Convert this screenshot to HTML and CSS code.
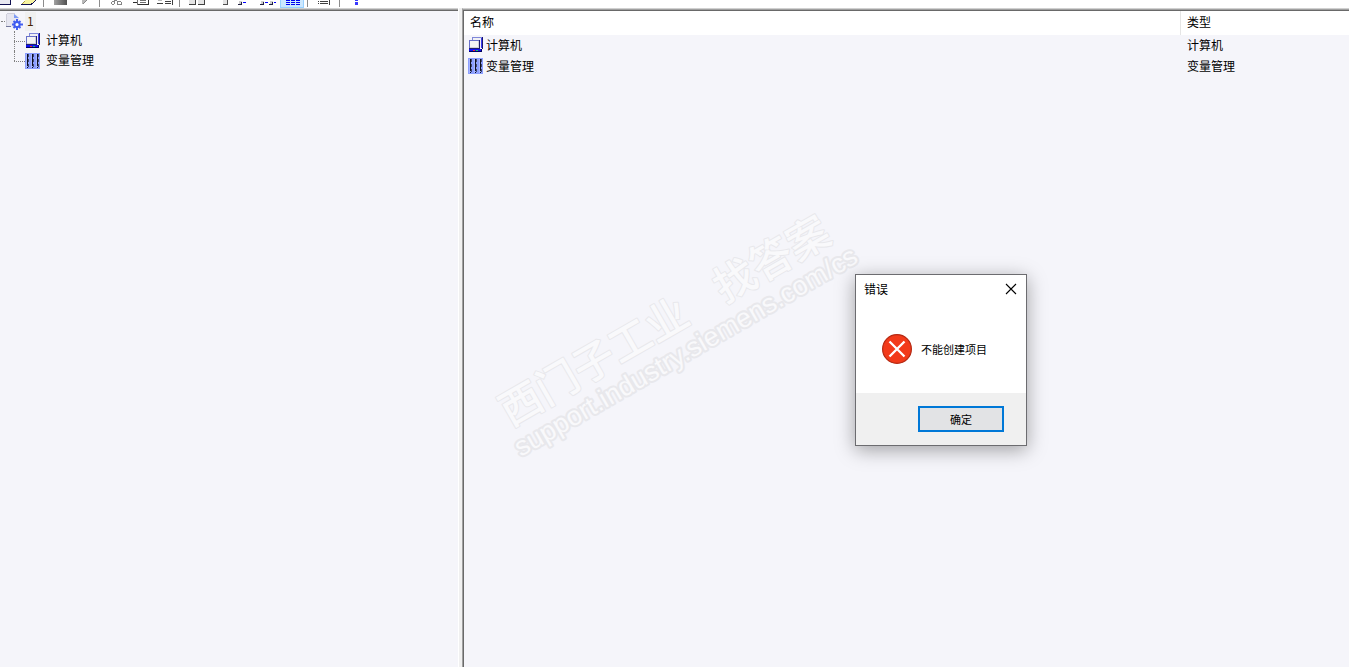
FILE: index.html
```
<!DOCTYPE html>
<html lang="zh-CN">
<head>
<meta charset="utf-8">
<title>项目管理器</title>
<link rel="stylesheet" href="styles.css">
</head>
<body>
<svg class="symbols" aria-hidden="true" shape-rendering="crispEdges">
  <symbol id="computer" viewBox="0 0 16 16">
    <path d="M5 1h8v9H5z" fill="#f0f0f4"/>
    <path d="M4 0h10v1H4zM4 0h1v3H4z" fill="#8088d8"/>
    <path d="M13 1h1v10h-1z" fill="#3c3cf0"/><path d="M14 0h1v12h-1z" fill="#181870"/>
    <path d="M1 3h11v9H1z" fill="#6870c8"/>
    <path d="M2 4h9v7H2z" fill="#f4f4f4"/><path d="M2 10h9v1H2zM10 4h1v7h-1z" fill="#d0d0d8"/>
    <path d="M11 3h1v9h-1zM1 11h11v1H1z" fill="#20206c"/>
    <path d="M1 12h12v2H1z" fill="#1010f0"/><path d="M1 14h13v1H1zM13 12h1v2h-1z" fill="#000060"/>
    <path d="M5 13h2v1H5z" fill="#f03030"/><path d="M8 13h2v1H8z" fill="#20c060"/>
  </symbol>
  <symbol id="tags" viewBox="0 0 16 16">
    <path d="M0 0h15v16H0z" fill="#8c9fff"/>
    <path d="M1 1h1v14H1zM6 1h1v14H6zM11 1h1v14h-1z" fill="#aab8ff"/>
    <path d="M2 1h1v12H2zM7 1h1v12H7zM12 1h1v12h-1zM2 14h1v1H2zM7 14h1v1H7zM12 14h1v1h-1z" fill="#101020"/>
    <path d="M3 1h1v3H3zM8 1h1v3H8zM13 1h1v3h-1zM3 6h1v3H3zM8 6h1v3H8zM13 6h1v3h-1zM3 11h1v3H3zM8 11h1v3H8zM13 11h1v3h-1z" fill="#404870"/>
  </symbol>
</svg>

<div class="app">
  <header class="toolbar">
    <button class="tool first" type="button" aria-label="新建"><svg viewBox="8 0 16 8"><path d="M8 0h10v4H8z" fill="#e8e8f0"/><path d="M8 4h11v1H8zM18 0h1v5h-1z" fill="#101050"/></svg></button>
    <button class="tool" type="button" aria-label="打开"><svg viewBox="0 0 24 8"><path d="M9 0h10l-4 4H6z" fill="#f7f3a0"/><path d="M5 4h11v1H5zM15 3h2v1h-2zM17 2h1v1h-1zM18 1h1v1h-1zM19 0h1v1h-1z" fill="#101050"/><path d="M6 3h1v1H6zM7 2h1v1H7zM8 1h1v1H8z" fill="#b0a040"/></svg></button>
    <span class="sep"></span>
    <button class="tool" type="button" aria-label="停止"><svg viewBox="0 0 24 8"><defs><linearGradient id="grey"><stop offset="0" stop-color="#a0a0a0"/><stop offset="1" stop-color="#505050"/></linearGradient></defs><path d="M6 0h13v5H6z" fill="url(#grey)"/></svg></button>
    <button class="tool" type="button" aria-label="运行"><svg viewBox="0 0 24 8"><path d="M10 0h5v1h-1v1h-1v1h-1v1h-2z" fill="#b8b8b8"/><path d="M14 0h1v1h-1zM13 1h1v1h-1zM12 2h1v1h-1zM11 3h1v1h-1z" fill="#888"/></svg></button>
    <span class="sep"></span>
    <button class="tool" type="button" aria-label="剪切"><svg viewBox="0 0 24 8"><path d="M10 0h3v1h-3zM8 1h3v1H8zM7 2h1v2H7zM10 2h1v2h-1zM8 4h2v1H8zM13 1h4v1h-4zM13 2h1v3h-1zM17 2h1v3h-1zM14 4h3v1h-3z" fill="#848484"/></svg></button>
    <button class="tool" type="button" aria-label="复制"><svg viewBox="0 0 24 8"><path d="M5 2h5v1H5zM10 4h11v1H10zM20 0h1v5h-1z" fill="#303030"/><path d="M12 0h6v1h-6zM12 2h6v1h-6zM9 0h1v5H9z" fill="#707070"/></svg></button>
    <button class="tool" type="button" aria-label="粘贴"><svg viewBox="0 0 24 8"><path d="M5 3h6v1H5zM13 1h6v1h-6zM13 3h6v1h-6zM20 0h1v5h-1z" fill="#404040"/><path d="M6 0h4v1H6z" fill="#bbb"/></svg></button>
    <span class="sep"></span>
    <button class="tool" type="button" aria-label="大图标"><svg viewBox="0 0 24 8"><path d="M5 0h6v4H5zM14 0h6v4h-6z" fill="#e4e4e4"/><path d="M5 4h7v1H5zM11 0h1v5h-1zM14 4h7v1h-7zM20 0h1v5h-1z" fill="#404040"/></svg></button>
    <button class="tool" type="button" aria-label="小图标"><svg viewBox="0 0 24 8"><path d="M15 0h5v4h-5z" fill="#e4e4e4"/><path d="M15 4h5v1h-5zM19 0h1v5h-1z" fill="#505050"/></svg></button>
    <button class="tool" type="button" aria-label="列表"><svg viewBox="0 0 24 8"><path d="M7 1h3v3H7z" fill="#ccc"/><path d="M6 4h4v1H6zM9 2h1v3H9z" fill="#202040"/><path d="M11 2h3v1h-3z" fill="#00f"/></svg></button>
    <button class="tool" type="button" aria-label="平铺"><svg viewBox="0 0 24 8"><path d="M5 1h3v3H5zM14 1h3v3h-3z" fill="#ccc"/><path d="M4 4h4v1H4zM7 2h1v3H7zM13 4h4v1h-4zM16 2h1v3h-1z" fill="#202040"/><path d="M9 2h3v1H9zM18 2h2v1h-2z" fill="#00f"/></svg></button>
    <button class="tool active" type="button" aria-label="详细信息"><svg viewBox="1 0 22 7"><path d="M6 0h4v1H6zM11 0h4v1h-4zM16 0h4v1h-4zM6 2h4v1H6zM11 2h4v1h-4zM16 2h4v1h-4zM6 4h4v1H6zM11 4h4v1h-4zM16 4h4v1h-4z" fill="#0000f0"/></svg></button>
    <span class="sep"></span>
    <button class="tool" type="button" aria-label="属性"><svg viewBox="0 0 24 8"><path d="M6 1h1v1H6zM6 3h1v1H6zM8 1h8v1H8zM8 3h8v1H8zM17 0h1v5h-1z" fill="#404040"/></svg></button>
    <span class="sep"></span>
    <button class="tool" type="button" aria-label="帮助"><svg viewBox="0 0 24 8"><path d="M11 0h3v1h-3zM11 2h3v3h-3z" fill="#3838ff"/></svg></button>
  </header>

  <main class="panes">
    <nav class="tree" aria-label="项目">
      <a class="node root" href="#"><svg class="root-icon" viewBox="0 0 18 18" aria-hidden="true">
        <path d="M2 2h8l4 4v9H2z" fill="#e6e6f0"/><path d="M9 2v4h5z" fill="#7f9cf4"/>
        <path d="M1 14h5v1H1z" fill="#74789c"/><path d="M1 2h1v12H1zM2 1h8v1H2z" fill="#d0d0dc"/>
        <path d="M12 7v11M7 12.500h11M8.500 9l7 7M15.500 9l-7 7" stroke="#4460f0" stroke-width="2"/>
        <circle cx="12" cy="12.500" r="2.600" fill="#fff" stroke="#3e5cf0" stroke-width="2"/></svg><span class="selected">1</span></a>
      <ul class="children">
        <li><a class="node" href="#"><svg class="icon" aria-hidden="true"><use href="#computer"/></svg><span>计算机</span></a></li>
        <li><a class="node" href="#"><svg class="icon" aria-hidden="true"><use href="#tags"/></svg><span>变量管理</span></a></li>
      </ul>
    </nav>
    <div class="splitter"></div>
    <section class="list">
      <table>
        <thead><tr><th scope="col">名称</th><th class="type" scope="col">类型</th></tr></thead>
        <tbody>
          <tr><td><div class="name"><svg class="icon" aria-hidden="true"><use href="#computer"/></svg>计算机</div></td><td>计算机</td></tr>
          <tr><td><div class="name"><svg class="icon" aria-hidden="true"><use href="#tags"/></svg>变量管理</div></td><td>变量管理</td></tr>
        </tbody>
      </table>
    </section>
  </main>
</div>

<svg class="watermark" viewBox="0 0 480 340" aria-hidden="true">
  <g transform="translate(76 289) rotate(-30)">
    <text class="mark-title" x="0" y="-31">西门子工业</text>
    <text class="mark-title" x="247" y="-31">找答案</text>
    <text class="mark-url" x="-6" y="0">support.industry.siemens.com/cs</text>
  </g>
</svg>

<div class="dialog" role="alertdialog" aria-labelledby="dialog-title" aria-describedby="dialog-message">
  <div class="dialog-head">
    <span id="dialog-title">错误</span>
    <button class="close" type="button" aria-label="关闭"><svg viewBox="0 0 12 12"><path d="M1 1l10 10M11 1L1 11" stroke="#000" stroke-width="1.100"/></svg></button>
  </div>
  <div class="dialog-body">
    <svg class="error" viewBox="0 0 30 30" aria-hidden="true"><circle cx="15" cy="15" r="14.400" fill="#f23a1a" stroke="#b52a14" stroke-width="1.200"/><path d="M7.500 7.500l15 15M22.500 7.500l-15 15" stroke="#fff" stroke-width="2.300"/></svg>
    <span id="dialog-message">不能创建项目</span>
  </div>
  <div class="dialog-foot"><button class="ok" type="button">确定</button></div>
</div>
</body>
</html>
```
FILE: styles.css
```
* { box-sizing: border-box; }

body {
  margin: 0;
  background: #f5f5fa;
  color: #000;
  font: 12px/18px "Noto Sans CJK SC", sans-serif;
  overflow: hidden;
}

button { margin: 0; padding: 0; border: 0; background: none; font: inherit; color: inherit; }
a { color: inherit; text-decoration: none; }
svg { display: block; flex: none; }
.symbols { position: absolute; width: 0; height: 0; }

.app { display: flex; flex-direction: column; height: 100vh; }

.toolbar { display: flex; flex: none; height: 8px; background: #fff; }
.tool { width: 24px; height: 8px; }
.tool.first { width: 16px; }
.tool svg { width: 100%; height: 8px; shape-rendering: crispEdges; }
.tool.active { background: #cce8ff; border: solid #99d1ff; border-width: 0 1px 1px; }
.tool.active svg { width: 22px; height: 7px; }
.sep { width: 8px; height: 7px; border-left: 3px solid #fff; background: linear-gradient(90deg, #8c8c8c 1px, #fff 1px); }

.panes { display: flex; flex: 1; min-height: 0; }

.tree {
  flex: none;
  width: 458px;
  border-top: 1px solid #d0d0d0;
  box-shadow: inset 0 1px #a0a0a0, inset 0 2px #696969;
  padding-top: 2px;
}
.node { display: flex; align-items: center; height: 20px; }
.node span { padding-bottom: 2px; }
.root { padding-left: 1px; }
.root::before { content: ""; width: 4px; border-top: 1px dotted #808080; }
.root-icon { width: 18px; height: 18px; }
.node .selected { width: 11px; margin-left: 2px; padding: 0 0 1px 2px; background: #f0f0f0; color: #4a2400; }
.children { margin: 0; padding: 0 0 0 14px; list-style: none; }
.children li { position: relative; }
.children li::before { content: ""; position: absolute; top: 0; left: 0; height: 100%; border-left: 1px dotted #808080; }
.children li:last-child::before { height: 50%; }
.children .node::before { content: ""; width: 11px; border-top: 1px dotted #808080; }
.children .node span { margin-left: 5px; }
.icon { width: 16px; height: 16px; }

.splitter {
  flex: none;
  width: 4px;
  border-left: 1px solid #fff;
  background: #f0f0f0;
}

.list {
  flex: 1;
  border-top: 1px solid #d0d0d0;
  border-left: 1px solid #a0a0a0;
  box-shadow: inset 0 1px #a0a0a0, inset 0 2px #696969, inset 1px 0 #696969;
  padding: 2px 0 0 1px;
}
table { width: 100%; border-collapse: separate; border-spacing: 0; table-layout: fixed; }
th { height: 24px; padding: 0 6px 2px; background: #fff; font-weight: normal; text-align: left; }
th.type { width: 169px; border-left: 1px solid #e5e5e5; }
td { height: 21px; padding: 0 7px 2px; }
td:first-child { padding-left: 4px; }
.name { display: flex; align-items: center; gap: 2px; }

.watermark { position: absolute; left: 450px; top: 165px; width: 480px; height: 340px; pointer-events: none; }
.watermark text { fill: #f9f9fb; stroke: #e8e8ec; stroke-linejoin: round; paint-order: stroke; }
.mark-title { font-size: 42px; font-weight: 500; stroke-width: 2px; }
.mark-url { font-family: "Liberation Sans", sans-serif; font-size: 27px; stroke-width: 4px; }

.dialog {
  position: absolute;
  left: 855px;
  top: 274px;
  width: 172px;
  background: #fff;
  border: 1px solid #6c6c70;
  box-shadow: 0 4px 18px rgba(0, 0, 0, .35);
}
.dialog-head { display: flex; justify-content: space-between; align-items: center; height: 30px; padding: 0 9px 2px 8px; }
.close svg { width: 12px; height: 12px; }
.dialog-body { display: flex; align-items: center; gap: 9px; height: 88px; padding-left: 26px; font-size: 11px; }
.error { width: 30px; height: 30px; }
.dialog-foot { display: flex; justify-content: flex-end; align-items: center; height: 52px; padding-right: 22px; background: #f0f0f0; }
.ok { width: 86px; height: 26px; border: 2px solid #0078d7; background: #e2e3e5; font-size: 11px; }
```
